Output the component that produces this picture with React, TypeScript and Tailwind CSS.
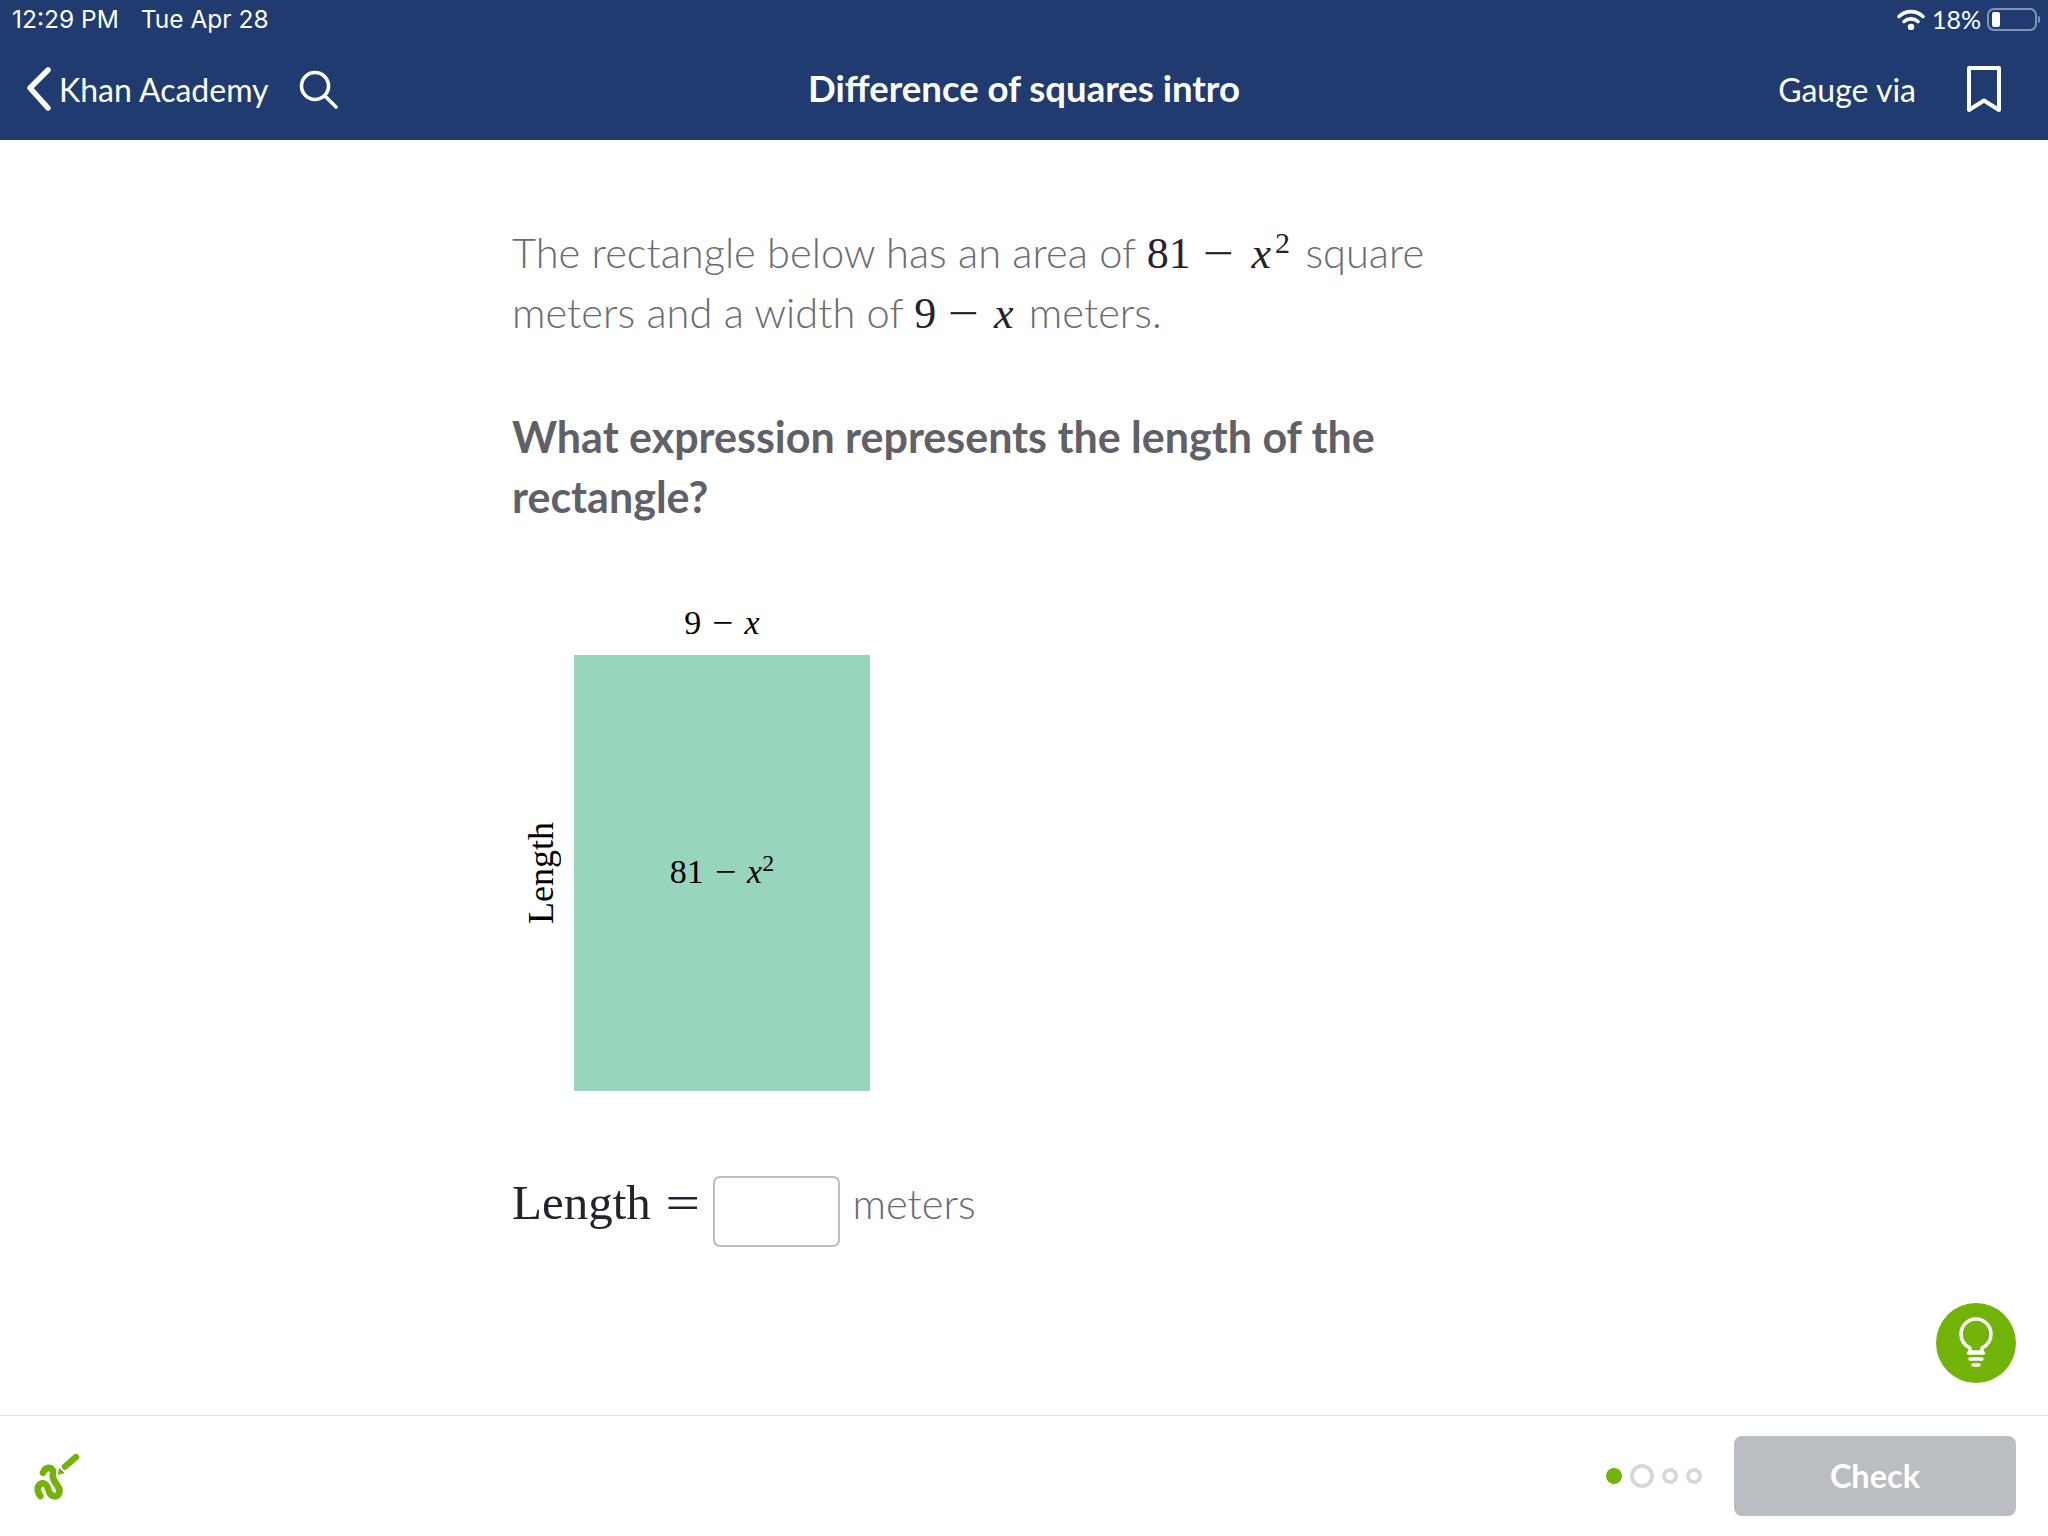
const math = "font-['Liberation_Serif','DejaVu_Serif',serif]";

function Minus({ cls }: { cls: string }) {
  return <span className={`inline-block ${cls}`}>−</span>;
}

export default function App() {
  return (
    <div className="relative flex h-[1536px] w-[2048px] flex-col overflow-hidden bg-white font-['Lato','Noto_Sans',sans-serif]">
      <header className="h-[140px] shrink-0 bg-[#1f3b6f] text-white">
        <div className="flex h-[38px] items-center justify-between pl-[12px] pr-[8px] font-['Inter',sans-serif] text-[24.500px]">
          <div className="flex gap-[22px]">
            <span>12:29 PM</span>
            <span>Tue Apr 28</span>
          </div>
          <div className="flex items-center gap-[6px]">
            <svg width="30" height="22" viewBox="0 0 30 22" fill="none" stroke="white" strokeWidth="3.6" strokeLinecap="round">
              <path d="M3 8.500 C10 2 20 2 27 8.500" />
              <path d="M8 13.500 C12 10 18 10 22 13.500" />
              <path d="M15 19 L15 19" strokeWidth="6.500" />
            </svg>
            <span className="font-['Lato',sans-serif] text-[25px] leading-none">18%</span>
            <div className="flex items-center gap-[1px]">
              <div className="flex h-[23px] w-[50px] items-center rounded-[7px] border-2 border-[#8094b8] pl-[3px]">
                <div className="h-[15px] w-[8px] rounded-[2px] bg-white" />
              </div>
              <div className="h-[7px] w-[2px] rounded-r bg-[#8094b8]" />
            </div>
          </div>
        </div>
        <nav className="grid h-[102px] grid-cols-3 items-center">
          <div className="flex items-center pl-[26px]">
            <svg width="26" height="44" viewBox="0 0 26 44" fill="none" stroke="white" strokeWidth="5.500" strokeLinecap="round" strokeLinejoin="round">
              <path d="M22 3 L4 21 L22 41" />
            </svg>
            <span className="ml-[7px] pt-[2px] text-[32px] leading-none">Khan Academy</span>
            <svg className="ml-[29px]" width="40" height="40" viewBox="0 0 40 40" fill="none" stroke="white" strokeWidth="3.600" strokeLinecap="round">
              <circle cx="17" cy="17" r="13.500" />
              <path d="M27 27 L38 38" />
            </svg>
          </div>
          <div className="pb-[1px] text-center text-[36.500px] font-bold leading-none">Difference of squares intro</div>
          <div className="flex items-center justify-end pr-[46px]">
            <span className="pt-[2px] text-[32px] leading-none">Gauge via</span>
            <svg className="ml-[50px]" width="36" height="48" viewBox="0 0 36 48" fill="none" stroke="white" strokeWidth="4" strokeLinejoin="round">
              <path d="M3 3 H33 V45 L18 35.500 L3 45 Z" />
            </svg>
          </div>
        </nav>
      </header>

      <main className="flex-1 pl-[512px] pt-[82px] text-[#6a6c72]">
        <p className="w-[960px] text-[41.600px] font-light leading-[60px]">
          The rectangle below has an area of{" "}
          <span className={`${math} text-[44px] leading-none text-[#21242c]`}>
            81
            <Minus cls="ml-[15px] mr-[21px] scale-x-125" />
            <i>x</i>
            <sup className="ml-[4px] text-[30px] leading-none">2</sup>
          </span>{" "}
          <span className="ml-[4px]">square</span>
          <br />
          meters and a width of{" "}
          <span className={`${math} text-[44px] leading-none text-[#21242c]`}>
            9
            <Minus cls="ml-[15px] mr-[18px] scale-x-125" />
            <i>x</i>
          </span>{" "}
          <span className="ml-[4px]">meters.</span>
        </p>
        <p className="mt-[65px] w-[960px] text-[43px] font-bold leading-[60px] text-[#5f6166]">
          What expression represents the length of the
          <br />
          rectangle?
        </p>

        <div className={`mt-[80px] text-black ${math}`}>
          <div className="ml-[62px] flex h-[48px] w-[296px] items-start justify-center text-[34px] leading-[32px]">
            <span>
              9
              <Minus cls="mx-[12px] scale-x-110" />
              <i>x</i>
            </span>
          </div>
          <div className="flex items-center">
            <div className="flex w-[62px] justify-start pl-[13px]">
              <span className="text-[36px] leading-[32px] [writing-mode:vertical-rl] rotate-180">Length</span>
            </div>
            <div className="flex h-[436px] w-[296px] items-center justify-center bg-[#97d5bc] pb-[3px] text-[34px] leading-none">
              <span>
                81
                <Minus cls="mx-[12px] scale-x-110" />
                <i>x</i>
                <sup className="text-[24px] leading-none">2</sup>
              </span>
            </div>
          </div>
        </div>

        <div className="mt-[85px] flex items-center">
          <span className={`${math} mb-[18px] text-[49px] leading-none text-[#21242c]`}>Length</span>
          <span className={`${math} mb-[18px] ml-[18px] inline-block scale-x-125 text-[49px] leading-none text-[#21242c]`}>=</span>
          <div className="ml-[17px] h-[71px] w-[127px] rounded-[7px] border-2 border-[#bdbec2] bg-white" />
          <span className="mb-[15px] ml-[12px] text-[41.600px] font-light leading-none">meters</span>
        </div>
      </main>

      <button className="absolute left-[1936px] top-[1303px] flex h-[80px] w-[80px] items-center justify-center rounded-full bg-[#71b307]">
        <svg width="80" height="80" viewBox="0 0 80 80" fill="none" stroke="white" strokeLinecap="round" strokeLinejoin="round">
          <path strokeWidth="3.500" d="M34 49 V45 C28 42 25 37 25 31 A15 15 0 0 1 55 31 C55 37 52 42 46 45 V49 Z" />
          <path strokeWidth="3.500" d="M32.500 50 H47.500" />
          <path strokeWidth="3.500" d="M34 56 H46" />
          <path strokeWidth="3.500" d="M37 62 H43" />
        </svg>
      </button>

      <footer className="flex h-[121px] shrink-0 items-center justify-between border-t border-[#dfe0e2] pl-[25px] pr-[32px]">
        <svg width="60" height="60" viewBox="0 0 180 180" fill="none" stroke="#71b307" strokeLinecap="round" strokeLinejoin="round">
          <path strokeWidth="20" d="M54 80 C62 60 86 62 84 80 C82 94 84 98 90 108 C98 122 108 128 102 142 C94 158 76 150 72 136 C68 122 62 110 52 112 C36 116 34 134 46 150" />
          <path strokeWidth="19" d="M153 33 L120 62" />
          <path strokeWidth="3" fill="#71b307" d="M100 84 L104 68 L116 80 Z" />
        </svg>
        <div className="flex items-center">
          <div className="h-[16px] w-[16px] rounded-full bg-[#71b307]" />
          <div className="ml-[8px] h-[24px] w-[24px] rounded-full border-[4px] border-[#d6d7da]" />
          <div className="ml-[8px] h-[16px] w-[16px] rounded-full border-[4px] border-[#d6d7da]" />
          <div className="ml-[8px] h-[16px] w-[16px] rounded-full border-[4px] border-[#d6d7da]" />
          <div className="ml-[32px] flex h-[80px] w-[282px] items-center justify-center rounded-[8px] bg-[#babdc2] text-[32.500px] font-bold text-white">
            Check
          </div>
        </div>
      </footer>
    </div>
  );
}
